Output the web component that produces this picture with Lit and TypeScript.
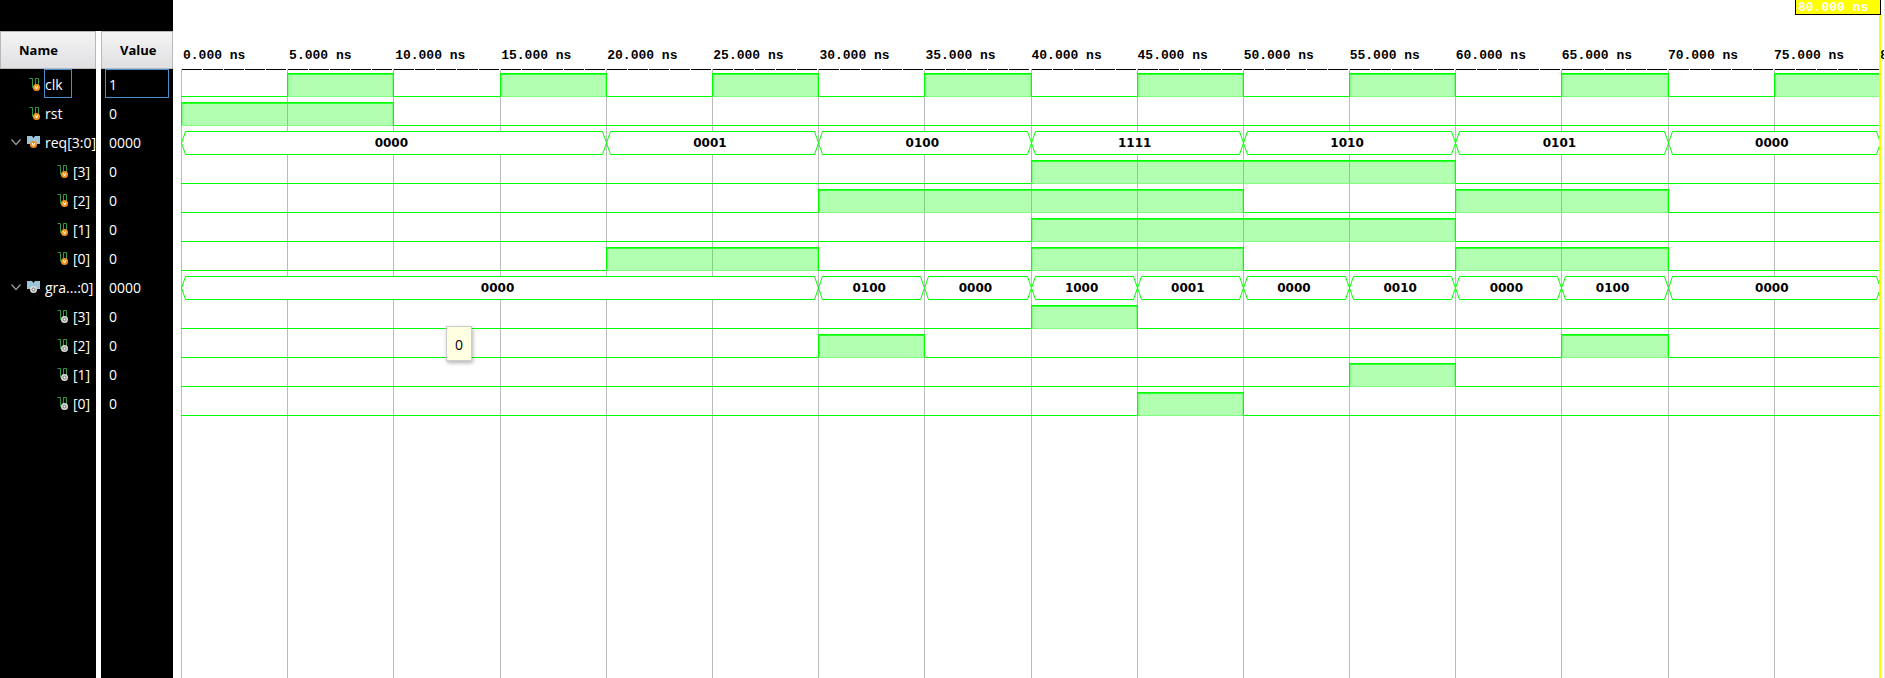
import { LitElement, html, css, svg, nothing } from "lit";
import { customElement, property } from "lit/decorators.js";

type Span = [value: string, duration: number];
interface Signal {
  name: string;
  value: string;
  kind: "bit" | "bus";
  dir: "in" | "out";
  child?: boolean;
  selected?: boolean;
  spans: Span[];
}

const bits = (pattern: string): Span[] => {
  const out: Span[] = [];
  for (const c of pattern) {
    const last = out[out.length - 1];
    if (last && last[0] === c) last[1]++;
    else out.push([c, 1]);
  }
  return out;
};

/* One character per 5 ns step, 0 ns to 80 ns. */
const SIGNALS: Signal[] = [
  { name: "clk", value: "1", kind: "bit", dir: "in", selected: true, spans: bits("0101010101010101") },
  { name: "rst", value: "0", kind: "bit", dir: "in", spans: bits("1100000000000000") },
  { name: "req[3:0]", value: "0000", kind: "bus", dir: "in", spans: [["0000", 4], ["0001", 2], ["0100", 2], ["1111", 2], ["1010", 2], ["0101", 2], ["0000", 2]] },
  { name: "[3]", value: "0", kind: "bit", dir: "in", child: true, spans: bits("0000000011110000") },
  { name: "[2]", value: "0", kind: "bit", dir: "in", child: true, spans: bits("0000001111001100") },
  { name: "[1]", value: "0", kind: "bit", dir: "in", child: true, spans: bits("0000000011110000") },
  { name: "[0]", value: "0", kind: "bit", dir: "in", child: true, spans: bits("0000110011001100") },
  { name: "gra...:0]", value: "0000", kind: "bus", dir: "out", spans: [["0000", 6], ["0100", 1], ["0000", 1], ["1000", 1], ["0001", 1], ["0000", 1], ["0010", 1], ["0000", 1], ["0100", 1], ["0000", 2]] },
  { name: "[3]", value: "0", kind: "bit", dir: "out", child: true, spans: bits("0000000010000000") },
  { name: "[2]", value: "0", kind: "bit", dir: "out", child: true, spans: bits("0000001000000100") },
  { name: "[1]", value: "0", kind: "bit", dir: "out", child: true, spans: bits("0000000000010000") },
  { name: "[0]", value: "0", kind: "bit", dir: "out", child: true, spans: bits("0000000001000000") },
];
const STEPS = Array.from({ length: 16 }, (_, i) => i);

const badge = (dir: "in" | "out") =>
  dir === "in"
    ? svg`<circle cx="7.5" cy="10.5" r="3.5" fill="#f3921f"/><path d="M6.2 9L7.5 12L8.8 9" fill="none" stroke="#fff"/>`
    : svg`<circle cx="7.5" cy="10.5" r="3.5" fill="#dcdcdc"/><circle cx="7.5" cy="10.5" r="1.5" fill="#fff" stroke="#666"/>`;

@customElement("signal-icon")
export class SignalIcon extends LitElement {
  @property() kind: "bit" | "bus" = "bit";
  @property() direction: "in" | "out" = "in";
  static styles = css`
    :host { display: block; flex: none; }
    svg { display: block; }
  `;
  render() {
    return this.kind === "bit"
      ? html`<svg width="12" height="14" viewBox="0 0 12 14">
          <path d="M0.5 1.5H3.5V10.5H6.5V1.5H9.5V8" fill="none" stroke="#2f9a41" />${badge(this.direction)}
        </svg>`
      : html`<svg width="14" height="14" viewBox="0 0 14 14">
          <path d="M0 1H5L6.5 3L8 1H13V9H9L6.5 6L4 9H0Z" fill="#9cc4d8" /><g transform="translate(-1 -1)">${badge(this.direction)}</g>
        </svg>`;
  }
}

@customElement("wave-lane")
export class WaveLane extends LitElement {
  @property({ attribute: false }) signal!: Signal;
  static styles = css`
    :host {
      display: grid;
      grid-template-columns: repeat(16, minmax(0, 1fr));
      height: 29px;
      padding: 4px 0 1px;
      box-sizing: border-box;
    }
    .bit { box-sizing: border-box; border-bottom: 1px solid #0f0; }
    .high {
      margin-right: -1px;
      z-index: 1;
      border: 1px solid #0f0;
      border-bottom-color: #80ff80;
      background: rgba(0, 255, 0, 0.3);
      background-clip: padding-box;
      box-shadow: inset 0 1px #33ff33, inset 1px 0 #80ff80, inset -1px 0 #80ff80;
    }
    .bus { display: flex; margin-right: -1px; }
    .cap { flex: none; display: block; }
    .text {
      flex: 1;
      min-width: 0;
      box-sizing: border-box;
      padding-right: 5px;
      border: solid #0f0;
      border-width: 1px 0;
      background: #fff;
      text-align: center;
      font: bold 12px/22px "DejaVu Sans", sans-serif;
    }
  `;
  render() {
    const s = this.signal;
    return s.spans.map(([v, d]) =>
      s.kind === "bit"
        ? html`<div class="bit ${v === "1" ? "high" : ""}" style="grid-column:span ${d}"></div>`
        : html`<div class="bus" style="grid-column:span ${d}">
            <svg class="cap" width="5" height="24"><path d="M5 .5H4.5L.5 12L4.5 23.5H5" fill="#fff" stroke="#0f0" /></svg>
            <div class="text">${v}</div>
            <svg class="cap" width="5" height="24"><path d="M0 .5H.5L4.5 12L.5 23.5H0" fill="#fff" stroke="#0f0" /></svg>
          </div>`
    );
  }
}

@customElement("app-root")
export class AppRoot extends LitElement {
  static styles = css`
    :host {
      display: flex;
      position: relative;
      min-height: 100vh;
      overflow: hidden;
      background: #fff;
      color: #000;
      font: 14px/29px "Open Sans", "Noto Sans", sans-serif;
    }
    .side {
      flex: none;
      display: grid;
      grid-template: 31px 1fr / 96px 72px;
      column-gap: 5px;
    }
    .top { grid-column: 1 / -1; background: #000; }
    .col { background: #000; color: #fff; }
    .head {
      box-sizing: border-box;
      height: 38px;
      border: 1px solid #b8b8b8;
      background: linear-gradient(#f4f4f5, #e0e0e2);
      color: #000;
      font-weight: 700;
      font-size: 13px;
      line-height: 36px;
      padding-left: 18px;
    }
    .row { display: flex; align-items: center; height: 29px; gap: 3px; padding-left: 29px; white-space: nowrap; }
    .row.bus { padding-left: 10px; }
    .row.child { padding-left: 57px; }
    .label { box-sizing: border-box; border: 1px solid transparent; height: 29px; }
    .label.selected { border-color: #4a90d0; padding-right: 8px; }
    .toggle { flex: none; border: 0; padding: 0; background: none; width: 12px; height: 12px; margin-right: 2px; }
    .toggle svg { display: block; }
    .value { box-sizing: border-box; height: 29px; margin: 0 4px; padding-left: 3px; border: 1px solid transparent; }
    .value.selected { border-color: #4a90d0; }
    .wave {
      flex: 1;
      min-width: 0;
      display: grid;
      grid-template: 69px 1fr / minmax(0, 1fr);
      margin: 0 5px 0 8px;
    }
    .axis { display: flex; align-items: flex-end; box-sizing: border-box; padding-bottom: 4px; font: bold 13px/18px "Liberation Mono", monospace; white-space: pre; }
    .tick { flex: 1 1 0; min-width: 0; padding-left: 2px; box-sizing: border-box; }
    .tick.last { flex: 0 0 0; }
    .grid, .lanes { grid-area: 2 / 1; }
    .grid { display: flex; }
    .step { flex: 1 1 0; display: flex; align-items: flex-start; border-left: 1px solid #bbb; }
    .dash { flex: 1 1 0; height: 1px; background: #000; margin-right: 1px; }
    .lanes { position: relative; }
    .cursor { position: absolute; top: 0; bottom: 0; right: 4px; width: 2px; background: #ff0; z-index: 2; }
    .flag {
      position: absolute;
      top: -2px;
      right: 4px;
      z-index: 3;
      box-sizing: border-box;
      width: 86px;
      height: 17px;
      border: 1px solid #000;
      background: #ff0;
      color: #fff;
      padding-left: 2px;
      font: bold 13px/18px "Liberation Mono", monospace;
    }
    .edge { position: absolute; top: 0; bottom: 0; right: 0; width: 1px; background: #e8e8e8; }
    .tip {
      position: absolute;
      left: 446px;
      top: 326px;
      z-index: 3;
      box-sizing: border-box;
      width: 26px;
      height: 35px;
      border: 1px solid #ccc;
      background: #ffffe1;
      box-shadow: 1px 2px 4px rgba(0, 0, 0, 0.3);
      text-align: center;
      line-height: 35px;
    }
  `;

  render() {
    return html`
      <div class="side">
        <div class="top"></div>
        <div class="col">
          <div class="head">Name</div>
          ${SIGNALS.map(
            (s) => html`<div class="row ${s.kind} ${s.child ? "child" : ""}">
              ${s.kind === "bus"
                ? html`<button class="toggle" aria-label="Collapse ${s.name}">
                    <svg width="12" height="12" viewBox="0 0 12 12"><path d="M1.5 3.5L6 8.5L10.5 3.5" fill="none" stroke="#999" stroke-width="1.3" /></svg>
                  </button>`
                : nothing}
              <signal-icon .kind=${s.kind} .direction=${s.dir}></signal-icon>
              <span class="label ${s.selected ? "selected" : ""}">${s.name}</span>
            </div>`
          )}
        </div>
        <div class="col">
          <div class="head">Value</div>
          ${SIGNALS.map((s) => html`<div class="value ${s.selected ? "selected" : ""}">${s.value}</div>`)}
        </div>
      </div>
      <div class="wave">
        <div class="axis">
          ${STEPS.map((i) => html`<span class="tick">${i * 5}.000 ns</span>`)}<span class="tick last">80.000 ns</span>
        </div>
        <div class="grid">
          ${STEPS.map(() => html`<div class="step">${[0, 1, 2, 3, 4].map(() => html`<i class="dash"></i>`)}</div>`)}
        </div>
        <div class="lanes">${SIGNALS.map((s) => html`<wave-lane .signal=${s}></wave-lane>`)}</div>
      </div>
      <div class="cursor"></div>
      <div class="flag">80.000 ns</div>
      <div class="edge"></div>
      <div class="tip" role="tooltip">0</div>
    `;
  }
}
